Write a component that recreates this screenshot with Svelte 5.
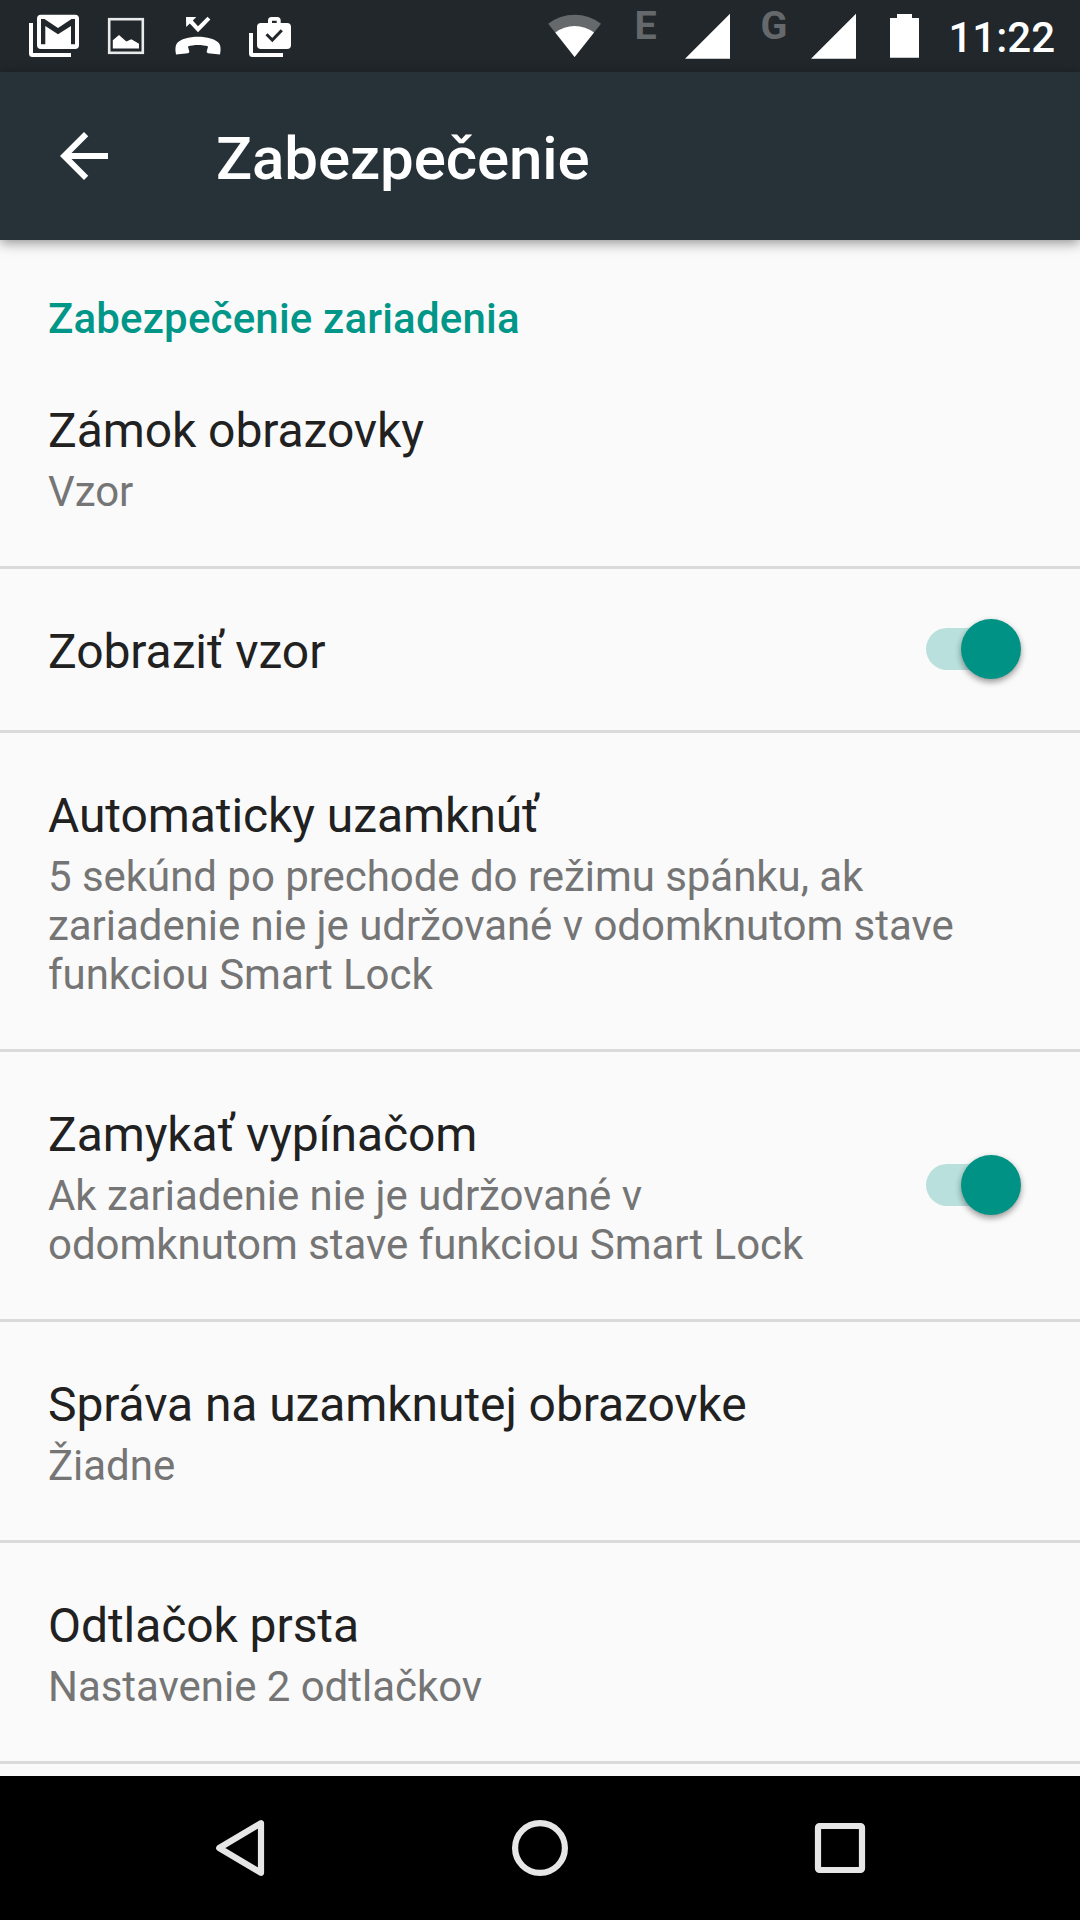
<script>
  let items = $state([
    { id: "screen-lock", title: "Zámok obrazovky", summary: "Vzor" },
    { id: "visible-pattern", title: "Zobraziť vzor", checked: true },
    {
      id: "auto-lock",
      title: "Automaticky uzamknúť",
      summary:
        "5 sekúnd po prechode do režimu spánku, ak zariadenie nie je udržované v odomknutom stave funkciou Smart Lock",
    },
    {
      id: "power-lock",
      title: "Zamykať vypínačom",
      summary: "Ak zariadenie nie je udržované v odomknutom stave funkciou Smart Lock",
      checked: true,
    },
    { id: "owner-info", title: "Správa na uzamknutej obrazovke", summary: "Žiadne" },
    { id: "fingerprint", title: "Odtlačok prsta", summary: "Nastavenie 2 odtlačkov" },
  ]);

  function toggle(item) {
    if (item.checked !== undefined) {
      item.checked = !item.checked;
    }
  }
</script>

{#snippet signal(type)}
  <svg class="signal" viewBox="0 0 98 72">
    <text x="2.500" y="39">{type}</text>
    <path d="M53 58.700 98 13.700V58.700Z" fill="#fff" />
  </svg>
{/snippet}

<div class="screen">
  <div class="status-bar">
    <svg class="notification" viewBox="0 0 72 72">
      <path d="M11 23h4v30h38v4H14.500q-3.500 0-3.500-3.500z" fill="#fff" />
      <rect x="19" y="14.700" width="42" height="34.300" rx="4" fill="#fff" />
      <path
        d="M23 19h3.500L40 28l13.500-9H57v25.300h-4V26L40 34.300 27.300 26v18.300H23z"
        fill="#21272b"
      />
    </svg>
    <svg class="notification" viewBox="0 0 72 72">
      <rect x="19.200" y="19.200" width="33.600" height="33.600" fill="none" stroke="#e9eaea" stroke-width="2.600" />
      <path d="M22.800 40.300 29 35l7.300 6.500 5-2.200 7.700 4.500v4.800H22.800z" fill="#fff" />
    </svg>
    <svg class="notification" viewBox="0 0 72 72">
      <path
        d="M36 36.700c9 0 17.500 2.300 21 6.500 1.800 2.300 2 6.500 1 11.300l-12-1.300c-1.200-.2-1.500-1-1.200-2.100l1.300-4.700c-5.500-2-14.700-2-20.200 0l1.300 4.700c.3 1.100 0 1.900-1.200 2.100l-12 1.300c-1-4.800-.8-9 1-11.300 3.500-4.200 12-6.500 21-6.500z"
        fill="#fff"
      />
      <path d="M24 17h10.300l-3.500 3.500L36 26.300l9.500-9.600 2.900 2.900L36 32.200l-8.200-8.800-3.600 3.600z" fill="#fff" />
    </svg>
    <svg class="notification" viewBox="0 0 72 72">
      <path d="M15 33h4v20h30v4H18.500q-3.500 0-3.500-3.500z" fill="#fff" />
      <path
        d="M34 23v-2.500q0-3.500 3.500-3.500h5.700q3.500 0 3.500 3.500V23H53q4 0 4 4v18q0 4-4 4H27q-4 0-4-4V27q0-4 4-4zm4 0h4.700v-2.300H38z"
        fill="#fff"
      />
      <path d="M32.500 34.300 38.300 40l9.500-9.800" fill="none" stroke="#21272b" stroke-width="3" />
    </svg>

    <div class="system-icons">
      <svg class="wifi" viewBox="0 0 54 72">
        <path d="M.2 23.800A43 43 0 0 1 53 23.800L26.600 57z" fill="#65696b" />
        <path d="M7.300 32.600A31.500 31.500 0 0 1 46 32.600L26.600 57z" fill="#fff" />
      </svg>
      {@render signal("E")}
      {@render signal("G")}
      <svg class="battery" viewBox="0 0 29 72">
        <path d="M7 14h15v4h7v39.700H0V18h7z" fill="#fff" />
      </svg>
      <span class="clock">11:22</span>
    </div>
  </div>

  <header class="toolbar">
    <svg class="back" viewBox="0 0 24 24">
      <path d="M20 11H7.830l5.590-5.590L12 4l-8 8 8 8 1.410-1.410L7.830 13H20v-2z" fill="#fff" />
    </svg>
    <h1>Zabezpečenie</h1>
  </header>

  <main>
    <h2>Zabezpečenie zariadenia</h2>
    {#each items as item (item.id)}
      <!-- svelte-ignore a11y_click_events_have_key_events, a11y_no_static_element_interactions -->
      <div class="item" onclick={() => toggle(item)}>
        <div class="text">
          <div class="title">{item.title}</div>
          {#if item.summary}
            <div class="summary">{item.summary}</div>
          {/if}
        </div>
        {#if item.checked !== undefined}
          <div class="switch" class:on={item.checked}>
            <div class="thumb"></div>
          </div>
        {/if}
      </div>
    {/each}
  </main>

  <nav>
    <svg viewBox="0 0 72 72">
      <path d="M15.200 36 57 11.200v49.600z" />
    </svg>
    <svg viewBox="0 0 72 72">
      <circle cx="36" cy="36" r="24.900" />
    </svg>
    <svg viewBox="0 0 72 72">
      <rect x="14" y="14" width="44" height="44" rx="1.500" />
    </svg>
  </nav>
</div>

<style>
  :global(body) {
    margin: 0;
    background: #fafafa;
  }

  .screen {
    display: flex;
    flex-direction: column;
    width: 1080px;
    height: 1920px;
    overflow: hidden;
    background: #fafafa;
    font-family: Roboto, sans-serif;
  }

  svg {
    display: block;
    flex: none;
  }

  .status-bar {
    display: flex;
    align-items: center;
    flex: none;
    height: 72px;
    padding: 0 24px 0 18px;
    background: #21272b;
  }

  .notification {
    width: 72px;
    height: 72px;
  }

  .system-icons {
    display: flex;
    align-items: center;
    margin-left: auto;
  }

  .wifi {
    width: 54px;
    height: 72px;
    margin-right: 30px;
  }

  .signal {
    width: 98px;
    height: 72px;
    margin-right: 28px;
  }

  .signal text {
    font-size: 39.5px;
    font-weight: 700;
    fill: #65696b;
  }

  .battery {
    width: 29px;
    height: 72px;
    margin: 0 28px 0 6px;
  }

  .clock {
    width: 108px;
    padding: 2px 1px 0 0;
    color: #fff;
    font-size: 42px;
    font-weight: 500;
    line-height: 49px;
    text-align: right;
  }

  .toolbar {
    display: flex;
    align-items: center;
    flex: none;
    height: 168px;
    padding-left: 48px;
    background: #263238;
    box-shadow: 0 3px 12px rgba(0, 0, 0, 0.42);
    z-index: 1;
  }

  .back {
    width: 72px;
    height: 72px;
  }

  h1 {
    margin: 0 0 0 96px;
    padding-top: 6px;
    color: #fff;
    font-size: 60px;
    font-weight: 500;
    line-height: 70px;
    letter-spacing: -0.1px;
  }

  main {
    flex: 1;
    min-height: 0;
    overflow: hidden;
  }

  h2 {
    margin: 0;
    padding: 54px 48px 5px;
    color: #009688;
    font-size: 42px;
    font-weight: 500;
    line-height: 49px;
    letter-spacing: 0.18px;
  }

  .item {
    display: flex;
    align-items: center;
    justify-content: space-between;
    padding: 0 48px;
    border-bottom: 3px solid #dadada;
  }

  .text {
    padding: 54px 0 50px;
  }

  .title {
    color: #212121;
    font-size: 48px;
    line-height: 57px;
    letter-spacing: -0.08px;
  }

  .summary {
    margin-top: 8px;
    color: #757575;
    font-size: 42px;
    line-height: 49px;
    letter-spacing: -0.04px;
  }

  .switch {
    display: flex;
    align-items: center;
    flex: none;
    width: 95px;
    height: 42px;
    margin: 0 11px 1px 78px;
    border-radius: 21px;
    background: #bdbdbd;
  }

  .switch.on {
    justify-content: flex-end;
    background: linear-gradient(to right, #b9e0dc 80px, transparent 80px);
  }

  .thumb {
    width: 60px;
    height: 60px;
    border-radius: 50%;
    background: #f1f1f1;
    box-shadow: 0 3px 6px rgba(0, 0, 0, 0.4);
  }

  .switch.on .thumb {
    background: #009385;
  }

  nav {
    display: flex;
    align-items: center;
    justify-content: space-between;
    flex: none;
    height: 144px;
    padding: 0 204px;
    box-sizing: border-box;
    background: #000;
  }

  nav svg {
    width: 72px;
    height: 72px;
    fill: none;
    stroke: #e6e6e6;
    stroke-width: 6.2;
    stroke-linejoin: round;
  }
</style>
